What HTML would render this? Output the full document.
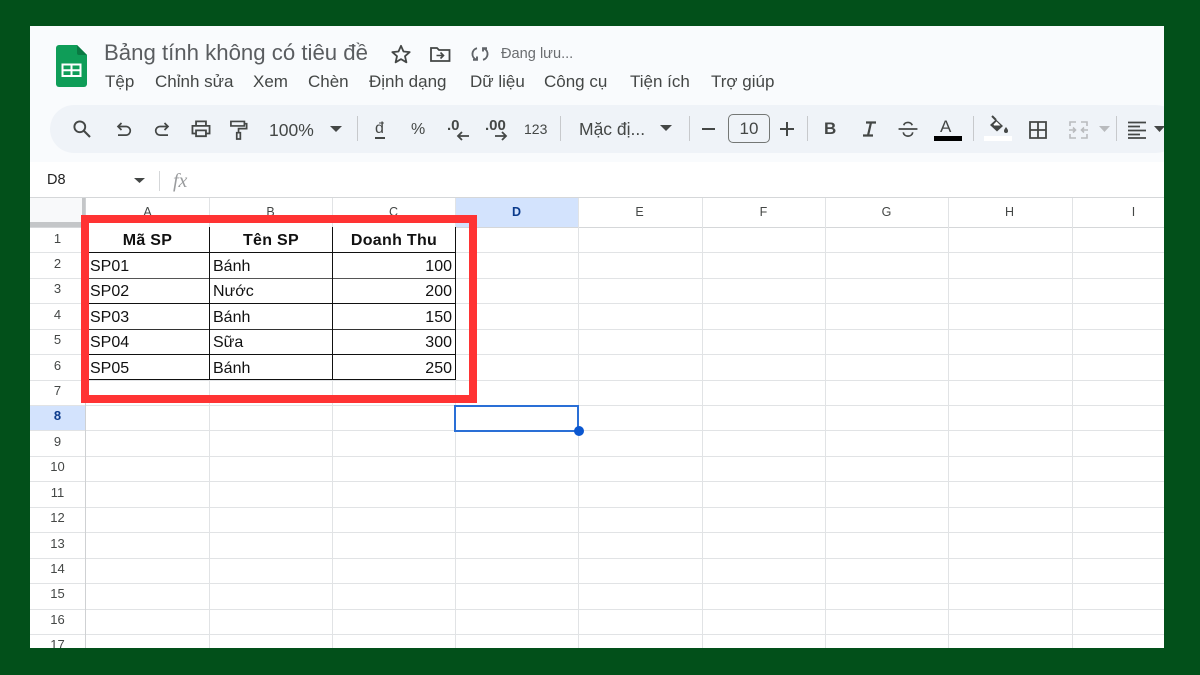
<!DOCTYPE html>
<html lang="vi"><head><meta charset="utf-8">
<style>
html,body{margin:0;padding:0;width:1200px;height:675px;overflow:hidden;background:#02501a;font-family:"Liberation Sans","DejaVu Sans",sans-serif}
#f{position:absolute;left:30px;top:26px;width:1134px;height:622px;background:#fff;overflow:hidden}
#s{position:absolute;left:-30px;top:-26px;width:1200px;height:675px}
.a{position:absolute;white-space:nowrap}
.t{position:absolute;white-space:nowrap;color:#444746}
.m{position:absolute;white-space:nowrap;color:#444746;top:72px;font-size:17px;line-height:19px}
.h{position:absolute;background:#e1e3e5;height:1px;left:30px;width:1140px}
.v{position:absolute;background:#e1e3e5;width:1px;top:198px;height:452px}
.rn{position:absolute;left:30px;width:55px;text-align:center;font-size:13px;color:#444746;height:14px;line-height:14px}
.cn{position:absolute;top:205px;text-align:center;font-size:12.500px;color:#444746;height:14px;line-height:14px;width:123px}
.c{position:absolute;font-size:16px;color:#111;line-height:18px;height:18px;white-space:nowrap}
.sep{position:absolute;top:116px;height:25px;width:1px;background:#c7c9cc}
.bk{position:absolute;background:#111}
svg{position:absolute;overflow:visible}
</style></head><body>
<div id="f"><div id="s">
<div class="a" style="left:30px;top:26px;width:1134px;height:136px;background:#f9fbfd"></div>
<div class="a" style="left:50px;top:105px;width:1130px;height:48px;background:#eff3f8;border-radius:24px"></div>

<svg style="left:56px;top:45px" width="32" height="42" viewBox="0 0 32 42"><path d="M3 0H21L31 10V39a3 3 0 0 1-3 3H3a3 3 0 0 1-3-3V3a3 3 0 0 1 3-3z" fill="#0f9d58"/><path d="M21 0L31 10H23a2 2 0 0 1-2-2z" fill="#0a7a43"/><path d="M6.500 19.500h18v11.500h-18z M15.500 19.500v11.500 M6.500 25.200h18" fill="none" stroke="#fff" stroke-width="2"/></svg>

<div class="t" style="left:104px;top:41px;font-size:22.200px;line-height:24px;color:#5a5d60">Bảng tính không có tiêu đề</div>
<svg style="left:390px;top:43px" width="22" height="22" viewBox="0 0 22 22"><path d="M11 2.800l2.500 5.700 6.200.6-4.700 4.100 1.400 6.100-5.400-3.200-5.400 3.200 1.400-6.100-4.700-4.100 6.200-.6z" fill="none" stroke="#444746" stroke-width="1.800" stroke-linejoin="round"/></svg>
<svg style="left:430px;top:45px" width="21" height="18" viewBox="0 0 21 18"><path d="M1 3h6l2 2h10.500v11H1z" fill="none" stroke="#444746" stroke-width="1.800"/><path d="M6.500 10.500h7M10.500 7.500l3 3-3 3" fill="none" stroke="#444746" stroke-width="1.600"/></svg>
<svg style="left:471px;top:45px" width="18" height="18" viewBox="0 0 18 18"><path d="M6 3.200A6 6 0 0 0 5 14.500M2 14.800h4v-3.300M12 14.800a6 6 0 0 0 1-11.300M16 3.200h-4v3.300" fill="none" stroke="#5f6368" stroke-width="1.900"/></svg>
<div class="t" style="left:501px;top:46px;font-size:14.600px;line-height:17px;color:#6a6d70">Đang lưu...</div>

<div class="m" style="left:105px">Tệp</div>
<div class="m" style="left:155px">Chỉnh sửa</div>
<div class="m" style="left:253px">Xem</div>
<div class="m" style="left:308px">Chèn</div>
<div class="m" style="left:369px">Định dạng</div>
<div class="m" style="left:470px">Dữ liệu</div>
<div class="m" style="left:544px">Công cụ</div>
<div class="m" style="left:630px">Tiện ích</div>
<div class="m" style="left:711px">Trợ giúp</div>

<svg style="left:72px;top:119px" width="20" height="20" viewBox="0 0 20 20"><circle cx="7.800" cy="7.800" r="5.400" fill="none" stroke="#444746" stroke-width="1.900"/><path d="M11.800 11.800l6.200 6.200" stroke="#444746" stroke-width="2.100"/></svg>
<svg style="left:116px;top:122px" width="16" height="15" viewBox="0 0 16 15"><path d="M5.500 1L2 4.500 5.500 8M2.500 4.500h7.500a4.300 4.300 0 0 1 0 8.600H2" fill="none" stroke="#444746" stroke-width="1.700"/></svg>
<svg style="left:154px;top:122px" width="16" height="15" viewBox="0 0 16 15"><path d="M10.500 1L14 4.500 10.500 8M13.500 4.500H6a4.300 4.300 0 0 0 0 8.600h8" fill="none" stroke="#444746" stroke-width="1.700"/></svg>
<svg style="left:191px;top:120px" width="20" height="18" viewBox="0 0 22 20"><path d="M5.500 6V1.500h11V6M5.500 15H1.500V6.500h19V15h-4M5.500 11.500h11v6.500h-11z" fill="none" stroke="#444746" stroke-width="2"/></svg>
<svg style="left:230px;top:120px" width="18" height="20" viewBox="0 0 20 22"><path d="M1 1.500h15v5H1zM16 4h2.500v5.500H9.500v4M7.500 14h4v7h-4z" fill="none" stroke="#444746" stroke-width="1.900"/></svg>
<div class="t" style="left:269px;top:120px;font-size:17.500px;line-height:20px">100%</div>
<svg style="left:330px;top:126px" width="12" height="6" viewBox="0 0 12 6"><path d="M0 0h12L6 6z" fill="#444746"/></svg>
<div class="sep" style="left:357px"></div>
<div class="t" style="left:375px;top:120px;font-size:16px;line-height:18px">đ</div>
<div class="a" style="left:375px;top:137px;width:10px;height:1.500px;background:#444746"></div>
<div class="t" style="left:411px;top:121px;font-size:16px;line-height:18px">%</div>
<div class="t" style="left:447px;top:117px;font-size:15px;line-height:18px;font-weight:bold">.0</div>
<svg style="left:456px;top:131px" width="13" height="10" viewBox="0 0 13 10"><path d="M13 5H2M6 1L2 5l4 4" fill="none" stroke="#444746" stroke-width="1.800"/></svg>
<div class="t" style="left:485px;top:117px;font-size:15px;line-height:18px;font-weight:bold">.00</div>
<svg style="left:495px;top:131px" width="13" height="10" viewBox="0 0 13 10"><path d="M0 5h11M7 1l4 4-4 4" fill="none" stroke="#444746" stroke-width="1.800"/></svg>
<div class="t" style="left:524px;top:121px;font-size:14px;line-height:16px">123</div>
<div class="sep" style="left:560px"></div>
<div class="t" style="left:579px;top:119px;font-size:17.500px;line-height:20px">Mặc đị...</div>
<svg style="left:660px;top:125px" width="12" height="6" viewBox="0 0 12 6"><path d="M0 0h12L6 6z" fill="#444746"/></svg>
<div class="sep" style="left:689px"></div>
<div class="a" style="left:702px;top:128px;width:13px;height:2px;background:#444746"></div>
<div class="a" style="left:728px;top:114px;width:40px;height:27px;border:1.500px solid #747775;border-radius:5px;text-align:center;font-size:17px;line-height:27px;color:#444746">10</div>
<svg style="left:780px;top:122px" width="14" height="14" viewBox="0 0 14 14"><path d="M7 0v14M0 7h14" stroke="#444746" stroke-width="2"/></svg>
<div class="sep" style="left:807px"></div>
<div class="t" style="left:824px;top:119px;font-size:17px;line-height:20px;font-weight:bold">B</div>
<svg style="left:862px;top:121px" width="15" height="16" viewBox="0 0 15 16"><path d="M4 1.500h10M1 14.500h10M9 1.500L6 14.500" fill="none" stroke="#444746" stroke-width="2.200"/></svg>
<svg style="left:898px;top:121px" width="20" height="17" viewBox="0 0 20 18"><path d="M0 8.500h20M14.500 4.500c-.8-2-2.500-3-4.500-3s-4 1-4.500 3M5 12c.3 2.500 2.500 4 5 4s4.700-1.500 5-4" fill="none" stroke="#444746" stroke-width="1.800"/></svg>
<div class="t" style="left:940px;top:118px;font-size:17px;line-height:18px">A</div>
<div class="a" style="left:934px;top:136px;width:28px;height:5px;background:#000"></div>
<div class="sep" style="left:973px"></div>
<svg style="left:988px;top:115px" width="21" height="20" viewBox="0 0 21 20"><path d="M4 1l4 4" stroke="#444746" stroke-width="2"/><path d="M8 4.500l7 6.500-6 5.500-7-6.500z" fill="#444746"/><path d="M5.500 9.500l3-3 4 4H6z" fill="#fff"/><path d="M18 12c1.500 2 2 3 2 4a2 2 0 0 1-4 0c0-1 .5-2 2-4z" fill="#444746"/></svg>
<div class="a" style="left:984px;top:136px;width:28px;height:5px;background:#fff"></div>
<svg style="left:1029px;top:121px" width="18" height="18" viewBox="0 0 18 18"><path d="M1 1h16v16H1zM9 1v16M1 9h16" fill="none" stroke="#444746" stroke-width="1.800"/></svg>
<svg style="left:1069px;top:121px" width="19" height="18" viewBox="0 0 19 18"><path d="M7 1H1v4M1 13v4h6M12 1h6v4M18 13v4h-6M0 9h6M4 6.500L6.500 9 4 11.500M19 9h-6M15 6.500L12.500 9l2.500 2.500" fill="none" stroke="#b9bbbe" stroke-width="1.600"/></svg>
<svg style="left:1099px;top:126px" width="11" height="6" viewBox="0 0 11 6"><path d="M0 0h11L5.500 6z" fill="#b9bbbe"/></svg>
<div class="sep" style="left:1116px"></div>
<svg style="left:1128px;top:121px" width="18" height="18" viewBox="0 0 18 18"><path d="M0 1.500h18M0 5.500h12M0 9.500h18M0 13.500h12M0 17h18" stroke="#444746" stroke-width="1.800"/></svg>
<svg style="left:1154px;top:126px" width="11" height="6" viewBox="0 0 11 6"><path d="M0 0h11L5.500 6z" fill="#444746"/></svg>

<div class="t" style="left:47px;top:172px;font-size:14.500px;line-height:17px;color:#222">D8</div>
<svg style="left:134px;top:178px" width="11" height="5" viewBox="0 0 11 5"><path d="M0 0h11L5.500 5z" fill="#444746"/></svg>
<div class="a" style="left:159px;top:171px;width:1px;height:20px;background:#d5d7d9"></div>
<div class="a" style="left:173px;top:170px;font-family:'Liberation Serif',serif;font-style:italic;font-size:20px;line-height:22px;color:#9a9c9e">fx</div>

<div class="a" style="left:30px;top:198px;width:56px;height:29px;background:#f8f9fa"></div>
<div class="a" style="left:30px;top:222px;width:56px;height:5px;background:#c4c6c8"></div>
<div class="a" style="left:82px;top:198px;width:4px;height:29px;background:#c4c6c8"></div>
<div class="a" style="left:455px;top:198px;width:124px;height:29px;background:#d3e3fd"></div>
<div class="a" style="left:30px;top:405px;width:55px;height:25px;background:#d3e3fd"></div>
<div class="h" style="top:197px;background:#d5d7d9"></div>
<div class="h" style="top:227px;background:#d5d7d9"></div>
<div class="h" style="top:252px"></div><div class="h" style="top:278px"></div><div class="h" style="top:303px"></div><div class="h" style="top:329px"></div><div class="h" style="top:354px"></div><div class="h" style="top:380px"></div><div class="h" style="top:405px"></div><div class="h" style="top:430px"></div><div class="h" style="top:456px"></div><div class="h" style="top:481px"></div><div class="h" style="top:507px"></div><div class="h" style="top:532px"></div><div class="h" style="top:558px"></div><div class="h" style="top:583px"></div><div class="h" style="top:609px"></div><div class="h" style="top:634px"></div>
<div class="v" style="left:85px;background:#cfd1d3"></div><div class="v" style="left:209px"></div><div class="v" style="left:332px"></div><div class="v" style="left:455px"></div><div class="v" style="left:578px"></div><div class="v" style="left:702px"></div><div class="v" style="left:825px"></div><div class="v" style="left:948px"></div><div class="v" style="left:1072px"></div>

<div class="cn" style="left:86px">A</div><div class="cn" style="left:209px">B</div><div class="cn" style="left:332px">C</div><div class="cn" style="left:455px;color:#0b3b8c;font-weight:bold">D</div><div class="cn" style="left:578px">E</div><div class="cn" style="left:702px">F</div><div class="cn" style="left:825px">G</div><div class="cn" style="left:948px">H</div><div class="cn" style="left:1072px">I</div>

<div class="rn" style="top:232px">1</div><div class="rn" style="top:257px">2</div><div class="rn" style="top:282px">3</div><div class="rn" style="top:308px">4</div><div class="rn" style="top:333px">5</div><div class="rn" style="top:359px">6</div><div class="rn" style="top:384px">7</div><div class="rn" style="top:409px;color:#0b3b8c;font-weight:bold">8</div><div class="rn" style="top:435px">9</div><div class="rn" style="top:460px">10</div><div class="rn" style="top:486px">11</div><div class="rn" style="top:511px">12</div><div class="rn" style="top:537px">13</div><div class="rn" style="top:562px">14</div><div class="rn" style="top:587px">15</div><div class="rn" style="top:613px">16</div><div class="rn" style="top:638px">17</div>

<div class="a" style="left:86px;top:227px;width:369px;height:153px;background:#fff"></div>
<div class="bk" style="left:86px;top:252px;width:370px;height:1px"></div><div class="bk" style="left:86px;top:278px;width:370px;height:1px;background:#555"></div><div class="bk" style="left:86px;top:303px;width:370px;height:1px"></div><div class="bk" style="left:86px;top:329px;width:370px;height:1px;background:#333"></div><div class="bk" style="left:86px;top:354px;width:370px;height:1px"></div><div class="bk" style="left:86px;top:379px;width:370px;height:1px"></div>
<div class="bk" style="left:209px;top:227px;width:1px;height:153px"></div><div class="bk" style="left:332px;top:227px;width:1px;height:153px"></div><div class="bk" style="left:455px;top:227px;width:1px;height:153px"></div>

<div class="c" style="left:86px;width:123px;top:232px;text-align:center;font-weight:bold;letter-spacing:.3px">Mã SP</div>
<div class="c" style="left:210px;width:122px;top:232px;text-align:center;font-weight:bold;letter-spacing:.3px">Tên SP</div>
<div class="c" style="left:333px;width:122px;top:232px;text-align:center;font-weight:bold;letter-spacing:.3px">Doanh Thu</div>
<div class="c" style="left:90px;top:258px">SP01</div><div class="c" style="left:213px;top:258px">Bánh</div><div class="c" style="left:333px;width:119px;text-align:right;top:258px">100</div>
<div class="c" style="left:90px;top:283px">SP02</div><div class="c" style="left:213px;top:283px">Nước</div><div class="c" style="left:333px;width:119px;text-align:right;top:283px">200</div>
<div class="c" style="left:90px;top:309px">SP03</div><div class="c" style="left:213px;top:309px">Bánh</div><div class="c" style="left:333px;width:119px;text-align:right;top:309px">150</div>
<div class="c" style="left:90px;top:334px">SP04</div><div class="c" style="left:213px;top:334px">Sữa</div><div class="c" style="left:333px;width:119px;text-align:right;top:334px">300</div>
<div class="c" style="left:90px;top:360px">SP05</div><div class="c" style="left:213px;top:360px">Bánh</div><div class="c" style="left:333px;width:119px;text-align:right;top:360px">250</div>

<div class="a" style="left:81px;top:215px;width:380px;height:172px;border:8px solid #ff3333"></div>

<div class="a" style="left:454px;top:405px;width:121px;height:23px;border:2px solid #2a6fd6"></div>
<div class="a" style="left:574px;top:426px;width:10px;height:10px;border-radius:50%;background:#0b57d0"></div>
</div></div>
</body></html>
